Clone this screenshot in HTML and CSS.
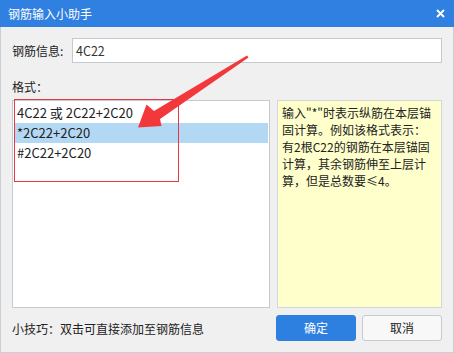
FILE: index.html
```html
<!DOCTYPE html>
<html lang="zh-CN">
<head>
<meta charset="utf-8">
<title>钢筋输入小助手</title>
<link rel="stylesheet" href="styles.css">
</head>
<body>
<div class="window">
  <div class="titlebar">
    <span class="title">钢筋输入小助手</span>
    <svg class="close" width="9" height="9" viewBox="0 0 9 9"><path d="M1 1L8 8M8 1L1 8" stroke="#fff" stroke-width="1.8" fill="none"/></svg>
  </div>
  <div class="content">
    <div class="field-row">
      <span class="field-label">钢筋信息:</span>
      <div class="field-input">4C22</div>
    </div>
    <div class="section-label">格式：</div>
    <div class="panels">
      <div class="list">
        <div class="row">4C22 或 2C22+2C20</div>
        <div class="row selected">*2C22+2C20</div>
        <div class="row">#2C22+2C20</div>
      </div>
      <div class="hint">输入"*"时表示纵筋在本层锚固计算。例如该格式表示：有2根C22的钢筋在本层锚固计算，其余钢筋伸至上层计算，但是总数要≤4。</div>
    </div>
    <div class="footer">
      <span class="tip">小技巧：双击可直接添加至钢筋信息</span>
      <div class="buttons">
        <div class="btn primary">确定</div>
        <div class="btn">取消</div>
      </div>
    </div>
  </div>
  <div class="highlight-box"></div>
  <svg class="arrow" width="454" height="353" viewBox="0 0 454 353">
    <polygon points="138,127.5 146.5,104.5 154,111 247,55.5 248.5,57.5 160,119 161.5,126" fill="#f2383a"/>
  </svg>
</div>
</body>
</html>
```

FILE: styles.css
```css
html, body {
  margin: 0;
  padding: 0;
  background: #f0f0f0;
}
body {
  width: 454px;
  height: 353px;
  overflow: hidden;
  font-family: "Noto Sans CJK SC", "Noto Sans", sans-serif;
  font-size: 12px;
  color: #222;
}
.window {
  position: relative;
  width: 454px;
  height: 353px;
  box-sizing: border-box;
}
.titlebar {
  height: 27px;
  background: #2f80e0;
  display: flex;
  align-items: center;
  justify-content: space-between;
  padding: 0 9px 0 8px;
  color: #fff;
}
.title {
  font-size: 12px;
  line-height: 17px;
}
.close {
  display: block;
  margin-top: -1px;
}
.content {
  height: 326px;
  box-sizing: border-box;
  border: 1px solid #c9ced7;
  border-top: none;
  padding: 0 11px;
  display: flex;
  flex-direction: column;
}
.field-row {
  display: flex;
  align-items: center;
  margin-top: 11px;
  height: 25px;
}
.field-label {
  width: 60px;
  line-height: 17px;
}
.field-input {
  flex: 1;
  height: 25px;
  box-sizing: border-box;
  background: #fff;
  border: 1px solid #c5c9d0;
  padding: 0 3px;
  line-height: 23px;
  font-size: 12.5px;
  color: #333;
}
.section-label {
  margin-top: 15px;
  line-height: 17px;
}
.panels {
  margin-top: 5px;
  height: 208px;
  display: flex;
  gap: 7px;
}
.list {
  width: 258px;
  box-sizing: border-box;
  background: #fff;
  border: 1px solid #c5c9d0;
  padding: 2px 1px;
}
.row {
  height: 20px;
  line-height: 20px;
  padding-left: 3px;
  font-size: 13px;
}
.row.selected {
  background: #b3d8f4;
}
.hint {
  flex: 1;
  box-sizing: border-box;
  background: #ffffcc;
  border: 1px solid #d3d6dc;
  padding: 3px 6px 0 4px;
  line-height: 17px;
  word-break: break-all;
}
.footer {
  margin-top: 7px;
  height: 26px;
  display: flex;
  align-items: center;
  justify-content: space-between;
}
.tip {
  line-height: 17px;
}
.buttons {
  display: flex;
  gap: 6px;
}
.btn {
  width: 80px;
  height: 26px;
  box-sizing: border-box;
  border: 1px solid #c5cad3;
  border-radius: 3px;
  background: #f8f8f8;
  text-align: center;
  line-height: 24px;
  color: #222;
}
.btn.primary {
  background: #2e80e0;
  border-color: #2e80e0;
  color: #fff;
}
.highlight-box {
  position: absolute;
  left: 14px;
  top: 99px;
  width: 165px;
  height: 83px;
  box-sizing: border-box;
  border: 1px solid #e8383d;
}
.arrow {
  position: absolute;
  left: 0;
  top: 0;
}
```
